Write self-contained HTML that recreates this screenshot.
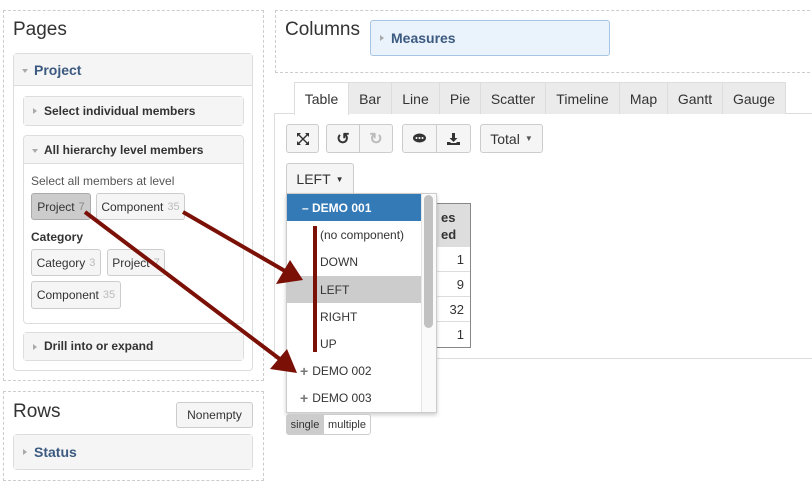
<!DOCTYPE html><html><head><style>
body{margin:0;width:812px;height:491px;position:relative;font-family:"Liberation Sans",sans-serif;background:#fff;overflow:hidden;color:#333}
.a{position:absolute!important;box-sizing:border-box}
.dash{border:1px dashed #ccc}
.pan{border:1px solid #ddd;border-radius:4px;background:#fff}
.hd{background:#f5f5f5;border-bottom:1px solid #ddd;font-weight:bold;font-size:13px;color:#333;padding-left:20px;position:relative}
.hd:before{content:"";position:absolute;left:9px;top:50%;margin-top:-3px;border-left:4px solid #aaa;border-top:3px solid transparent;border-bottom:3px solid transparent}
.hd.open:before{border-top:4px solid #aaa;border-left:3px solid transparent;border-right:3px solid transparent;border-bottom:0;margin-top:-1px;left:8px}
.btn{border:1px solid #ccc;border-radius:3px;background:#f5f5f5;font-size:13px;color:#333;display:flex;align-items:center;justify-content:center}
.g{color:#bbb;font-size:11px;margin-left:4px}
.tab{top:82px;height:32px;border:1px solid #ddd;background:#ebebeb;font-size:14px;display:flex;align-items:center;justify-content:center;border-bottom:none}
.it{left:287px;width:134px;height:27px;font-size:12px;display:flex;align-items:center;padding-left:33px}
.num{left:436px;width:34px;font-size:13px;text-align:right;padding-right:6px;border-top:1px solid #ddd;height:25px;line-height:25px}
</style></head><body>
<div class="a dash" style="left:3px;top:10px;width:261px;height:371px"></div>
<div class="a" style="left:13px;top:19px;font-size:19px;color:#333">Pages</div>
<div class="a pan" style="left:13px;top:53px;width:240px;height:318px"></div>
<div class="a hd open" style="left:14px;top:54px;width:238px;height:32px;line-height:32px;font-size:14px;color:#3c5a80">Project</div>
<div class="a pan" style="left:23px;top:96px;width:221px;height:30px;background:#f5f5f5"><div class="hd" style="border:0;line-height:28px;font-size:12px">Select individual members</div></div>
<div class="a pan" style="left:23px;top:135px;width:221px;height:189px"></div>
<div class="a hd open" style="left:24px;top:136px;width:219px;height:28px;line-height:28px;font-size:12px;border-radius:4px 4px 0 0">All hierarchy level members</div>
<div class="a" style="left:31px;top:174px;font-size:12px;color:#555">Select all members at level</div>
<div class="a btn" style="left:31px;top:193px;width:60px;height:27px;background:#ccc;border-color:#aaa;font-size:12px">Project<span class="g" style="color:#888">7</span></div>
<div class="a btn" style="left:96px;top:193px;width:89px;height:27px;font-size:12px">Component<span class="g">35</span></div>
<div class="a" style="left:31px;top:230px;font-size:12px;font-weight:bold">Category</div>
<div class="a btn" style="left:31px;top:249px;width:70px;height:27px;font-size:12px">Category<span class="g">3</span></div>
<div class="a btn" style="left:107px;top:249px;width:58px;height:27px;font-size:12px">Project<span class="g">7</span></div>
<div class="a btn" style="left:31px;top:281px;width:90px;height:28px;font-size:12px">Component<span class="g">35</span></div>
<div class="a pan" style="left:23px;top:332px;width:221px;height:29px;background:#f5f5f5"><div class="hd" style="border:0;line-height:27px;font-size:12px">Drill into or expand</div></div>

<div class="a dash" style="left:3px;top:391px;width:261px;height:90px"></div>
<div class="a" style="left:13px;top:401px;font-size:19px;color:#333">Rows</div>
<div class="a btn" style="left:176px;top:402px;width:77px;height:26px;font-size:12px">Nonempty</div>
<div class="a pan" style="left:13px;top:434px;width:240px;height:36px;background:#f5f5f5"><div class="hd" style="border:0;line-height:34px;font-size:14px;color:#3c5a80">Status</div></div>

<div class="a dash" style="left:275px;top:10px;width:545px;height:63px"></div>
<div class="a" style="left:285px;top:19px;font-size:19px;color:#333">Columns</div>
<div class="a" style="left:370px;top:20px;width:240px;height:36px;background:#eaf2fb;border:1px solid #a6c4e4;border-radius:3px"><div class="hd" style="background:none;border:0;line-height:34px;font-size:14px;color:#3c5a80">Measures</div></div>

<div class="a" style="left:274px;top:113px;width:540px;height:246px;border-left:1px solid #ddd;border-top:1px solid #ddd;border-bottom:1px solid #ddd"></div>
<div class="a tab" style="left:294px;width:55px;background:#fff;height:33px">Table</div>
<div class="a tab" style="left:348px;width:44px">Bar</div>
<div class="a tab" style="left:391px;width:49px">Line</div>
<div class="a tab" style="left:439px;width:42px">Pie</div>
<div class="a tab" style="left:480px;width:66px">Scatter</div>
<div class="a tab" style="left:545px;width:75px">Timeline</div>
<div class="a tab" style="left:619px;width:49px">Map</div>
<div class="a tab" style="left:667px;width:56px">Gantt</div>
<div class="a tab" style="left:722px;width:64px">Gauge</div>

<div class="a btn" style="left:286px;top:124px;width:33px;height:29px"><svg width="12" height="12"><path d="M0 0h4L2.5 1.5 6 5 9.5 1.5 8 0h4v4l-1.5-1.5L7 6l3.5 3.5L12 8v4H8l1.5-1.5L6 7l-3.5 3.5L4 12H0V8l1.5 1.5L5 6 1.5 2.5 0 4z" fill="#333"/></svg></div>
<div class="a btn" style="left:326px;top:124px;width:34px;height:29px;border-radius:3px 0 0 3px;font-size:16px;font-weight:bold">↺</div>
<div class="a btn" style="left:359px;top:124px;width:34px;height:29px;border-radius:0 3px 3px 0;font-size:16px;color:#bbb;font-weight:bold">↻</div>
<div class="a btn" style="left:402px;top:124px;width:35px;height:29px;border-radius:3px 0 0 3px"><svg width="13" height="11"><ellipse cx="6.5" cy="5" rx="6.5" ry="4.5" fill="#333"/><circle cx="3.5" cy="5" r="1" fill="#fff"/><circle cx="6.5" cy="5" r="1" fill="#fff"/><circle cx="9.5" cy="5" r="1" fill="#fff"/></svg></div>
<div class="a btn" style="left:436px;top:124px;width:35px;height:29px;border-radius:0 3px 3px 0"><svg width="13" height="12"><path d="M5 0h3v5h2.5L6.5 9 2.5 5H5z M0 9h3l1 1h5l1-1h3v3H0z" fill="#333"/></svg></div>
<div class="a btn" style="left:480px;top:124px;width:63px;height:29px;font-size:14px">Total <span style="font-size:8px;margin-left:5px;color:#555">▼</span></div>
<div class="a btn" style="left:286px;top:163px;width:68px;height:31px;font-size:14px;border-bottom:none;border-radius:3px 3px 0 0">LEFT <span style="font-size:8px;margin-left:5px">▼</span></div>

<div class="a" style="left:430px;top:203px;width:41px;height:145px;border:1px solid #888"></div>
<div class="a" style="left:431px;top:204px;width:39px;height:42px;background:#ddd;font-weight:bold;font-size:13px;padding:5px 0 0 10px;line-height:17px">es<br>ed</div>
<div class="a num" style="top:246px">1</div>
<div class="a num" style="top:271px">9</div>
<div class="a num" style="top:296px">32</div>
<div class="a num" style="top:321px">1</div>

<div class="a" style="left:286px;top:193px;width:151px;height:220px;background:#fff;border:1px solid #ccc;box-shadow:0 2px 4px rgba(0,0,0,.2)"></div>
<div class="a" style="left:287px;top:194px;width:134px;height:27px;background:#337ab7;color:#fff;font-weight:bold;font-size:12px;display:flex;align-items:center;padding-left:15px">– DEMO 001</div>
<div class="a it" style="top:221px">(no component)</div>
<div class="a it" style="top:248px">DOWN</div>
<div class="a it" style="top:276px;background:#ccc">LEFT</div>
<div class="a it" style="top:303px">RIGHT</div>
<div class="a it" style="top:330px">UP</div>
<div class="a it" style="top:357px;padding-left:13px"><b style="color:#777;margin-right:4px;font-size:14px">+</b>DEMO 002</div>
<div class="a it" style="top:384px;padding-left:13px"><b style="color:#777;margin-right:4px;font-size:14px">+</b>DEMO 003</div>
<div class="a" style="left:421px;top:194px;width:15px;height:218px;border-left:1px solid #e5e5e5;background:#fafafa"></div>
<div class="a" style="left:424px;top:195px;width:9px;height:133px;background:#c1c1c1;border-radius:5px"></div>

<div class="a btn" style="left:286px;top:414px;width:38px;height:21px;font-size:11px;background:#ccc;border-radius:3px 0 0 3px">single</div>
<div class="a btn" style="left:323px;top:414px;width:48px;height:21px;font-size:11px;border-radius:0 3px 3px 0;background:#fff">multiple</div>

<svg class="a" style="left:0;top:0" width="812" height="491">
<rect x="313" y="226" width="4" height="126" fill="#7b1006"/>
<line x1="183" y1="212" x2="285" y2="271" stroke="#7b1006" stroke-width="4"/>
<polygon points="303,280 276,284 290,260" fill="#7b1006"/>
<line x1="85" y1="212" x2="281" y2="360" stroke="#7b1006" stroke-width="4"/>
<polygon points="297,373 270,369 287,349" fill="#7b1006"/>
</svg>
</body></html>
